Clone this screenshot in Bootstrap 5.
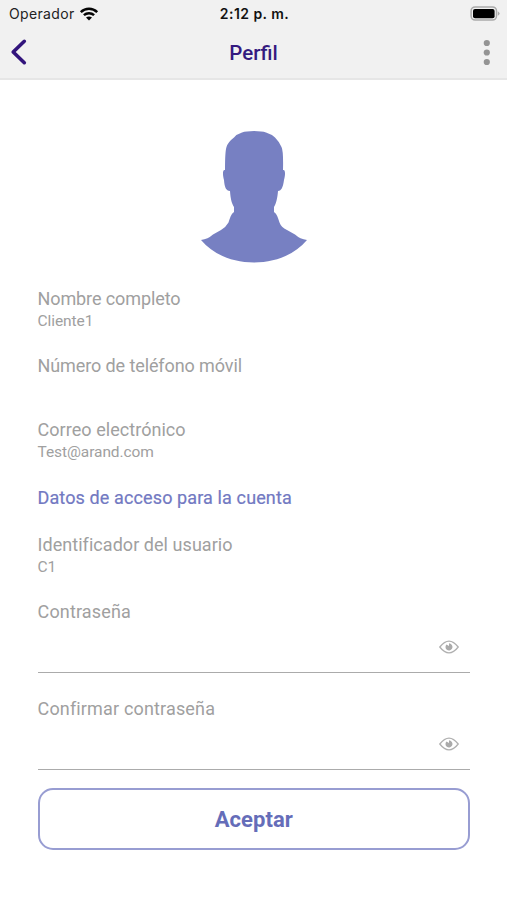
<!DOCTYPE html>
<html lang="es">
<head>
<meta charset="utf-8">
<meta name="viewport" content="width=device-width, initial-scale=1">
<title>Perfil</title>
<link href="https://cdn.jsdelivr.net/npm/bootstrap@5.3.0/dist/css/bootstrap.min.css" rel="stylesheet">
<style>
  body { font-family: Roboto, "Liberation Sans", sans-serif; color: #a0a0a0; min-height: 900px; overflow: hidden; }
  .top-area { background: #f1f1f1; height: 80px; border-bottom: 2px solid #e6e6e6; }
  .status-bar { height: 28px; font-family: Inter, sans-serif; font-size: 14px; line-height: 28px; color: #222; padding: 0 7px 0 9px; }
  .status-bar > *, .title-bar > * { flex: 1 1 0; }
  .carrier { letter-spacing: .35px; }
  .clock { font-weight: 600; color: #111; letter-spacing: .45px; }
  .title-bar { height: 50px; padding: 0 16px 2px 10px; }
  .screen-title { font-size: 20.5px; font-weight: 500; line-height: 24px; letter-spacing: 0; color: #341a80; padding: 1px 0 0 6px; }
  .content { padding: 50px 37px 0 37.5px; }
  .avatar { height: 158px; }
  .field-label { font-size: 18px; line-height: 22px; letter-spacing: -.1px; }
  .field-label.wide { letter-spacing: .05px; }
  .field-label.wider { letter-spacing: .16px; }
  .field-value { font-size: 15.5px; line-height: 22px; height: 21px; letter-spacing: -.08px; }
  .field-value.empty { height: 18px; }
  .gap-field { margin-bottom: 24px; }
  .section-title { color: #7279c2; font-weight: 400; -webkit-text-stroke: .2px #7279c2; line-height: 23px; letter-spacing: .12px; margin-bottom: 25px; }
  .secret { height: 72px; border-bottom: 1px solid #ababab; margin-bottom: 25px; }
  .secret-entry { height: 48px; padding-right: 11px; }
  .accept { height: 62px; margin-top: 18px; border: 2px solid #989dd2; border-radius: 15px; color: #656db9; font-size: 22px; font-weight: 700; letter-spacing: .05px; --bs-btn-hover-bg: #f2f3fb; }
</style>
</head>
<body class="bg-white">
<header class="top-area">
  <div class="status-bar d-flex align-items-center">
    <div class="d-flex align-items-center"><span class="carrier">Operador</span>
      <svg class="ms-1" width="20" height="14" viewBox="0 0 20 14" fill="none" stroke="#050505" stroke-width="2.5"><path d="M1.8 5.1C6.5.6 13.5.6 18.2 5.1M4.9 8.2C7.8 5.5 12.2 5.5 15.1 8.2"/><path d="M10 13.5L7 10.5Q10 8.3 13 10.5Z" fill="#050505" stroke="none"/></svg>
    </div>
    <div class="clock text-center text-nowrap">2:12 p. m.</div>
    <div class="d-flex justify-content-end">
      <svg width="31" height="16" viewBox="0 0 31 16"><rect x="2.1" y=".9" width="25.4" height="13.2" rx="4" fill="#f1f1f1" stroke="#aaa" stroke-width="1.5"/><rect x="4" y="2.9" width="21.6" height="9.3" rx="2" fill="#000"/><path d="M28.8 5.2Q32.4 7.5 28.8 9.8Z" fill="#aaa"/></svg>
    </div>
  </div>
  <div class="title-bar d-flex align-items-center">
    <div class="d-flex"><svg width="18" height="28" viewBox="0 0 18 28"><path d="M14.3 3.3L3.2 14L14.3 24.7" fill="none" stroke="#32147c" stroke-width="3.6" stroke-linecap="round" stroke-linejoin="round"/></svg></div>
    <h1 class="screen-title text-center m-0">Perfil</h1>
    <div class="d-flex justify-content-end"><svg width="8" height="28" viewBox="0 0 8 28" fill="#949494"><circle cx="3.8" cy="5" r="3.1"/><circle cx="3.8" cy="14.5" r="3.1"/><circle cx="3.8" cy="24" r="3.1"/></svg></div>
  </div>
</header>
<main class="content">
  <div class="avatar d-flex justify-content-center">
    <svg width="108" height="134" viewBox="200 130 108 134" role="img" aria-label="Foto de perfil"><path fill="#7780c2" d="M254 131Q246 131 242 132.500Q237 134 234 137.500Q228 142 226.500 147Q225 151 225 170C222.500 169 222.500 175 224 180C224.500 187 226 191 230 191C230.500 199 232 204 234 207V212C231 214 230 218 228.500 222.500Q226 227 221 230L213 234.500Q208 239 201 240C214 255 233 262.500 254 262.500C275 262.500 294 255 307 240Q300 239 295 234.500L287 230Q281 227 279.500 222.500C278 218 277 214 274 212V207C276 204 277.500 198 278 191C281.500 191 283 187 284 180C285.500 175 285.500 169 283 170Q283.500 151 281.500 147Q279.500 142 275 137.500Q271 134 266 132.500Q262 131 254 131Z"/></svg>
  </div>
  <section class="gap-field">
    <div class="field-label">Nombre completo</div>
    <div class="field-value">Cliente1</div>
  </section>
  <section class="gap-field">
    <div class="field-label">Número de teléfono móvil</div>
    <div class="field-value empty"></div>
  </section>
  <section class="gap-field">
    <div class="field-label wide">Correo electrónico</div>
    <div class="field-value">Test@arand.com</div>
  </section>
  <h2 class="field-label section-title">Datos de acceso para la cuenta</h2>
  <section class="gap-field">
    <div class="field-label wide">Identificador del usuario</div>
    <div class="field-value">C1</div>
  </section>
  <section class="secret">
    <div class="field-label wider">Contraseña</div>
    <div class="secret-entry d-flex justify-content-end align-items-center">
      <svg width="20" height="14" viewBox="0 0 20 14"><path d="M.8 7Q10-4.800 19.200 7Q10 18.800.8 7Z" fill="#fff" stroke="#b0b0b0" stroke-width="1.300"/><path d="M10 3.300L10 6L7.500 4.500A3.500 3.500 0 1 0 11.500 3.800Z" fill="#aaa"/></svg>
    </div>
  </section>
  <section class="secret mb-0">
    <div class="field-label wider">Confirmar contraseña</div>
    <div class="secret-entry d-flex justify-content-end align-items-center">
      <svg width="20" height="14" viewBox="0 0 20 14"><path d="M.8 7Q10-4.800 19.200 7Q10 18.800.8 7Z" fill="#fff" stroke="#b0b0b0" stroke-width="1.300"/><path d="M10 3.300L10 6L7.500 4.500A3.500 3.500 0 1 0 11.500 3.800Z" fill="#aaa"/></svg>
    </div>
  </section>
  <button class="btn accept w-100 p-0" type="button">Aceptar</button>
</main>
<script src="https://cdn.jsdelivr.net/npm/bootstrap@5.3.0/dist/js/bootstrap.bundle.min.js"></script>
</body>
</html>
